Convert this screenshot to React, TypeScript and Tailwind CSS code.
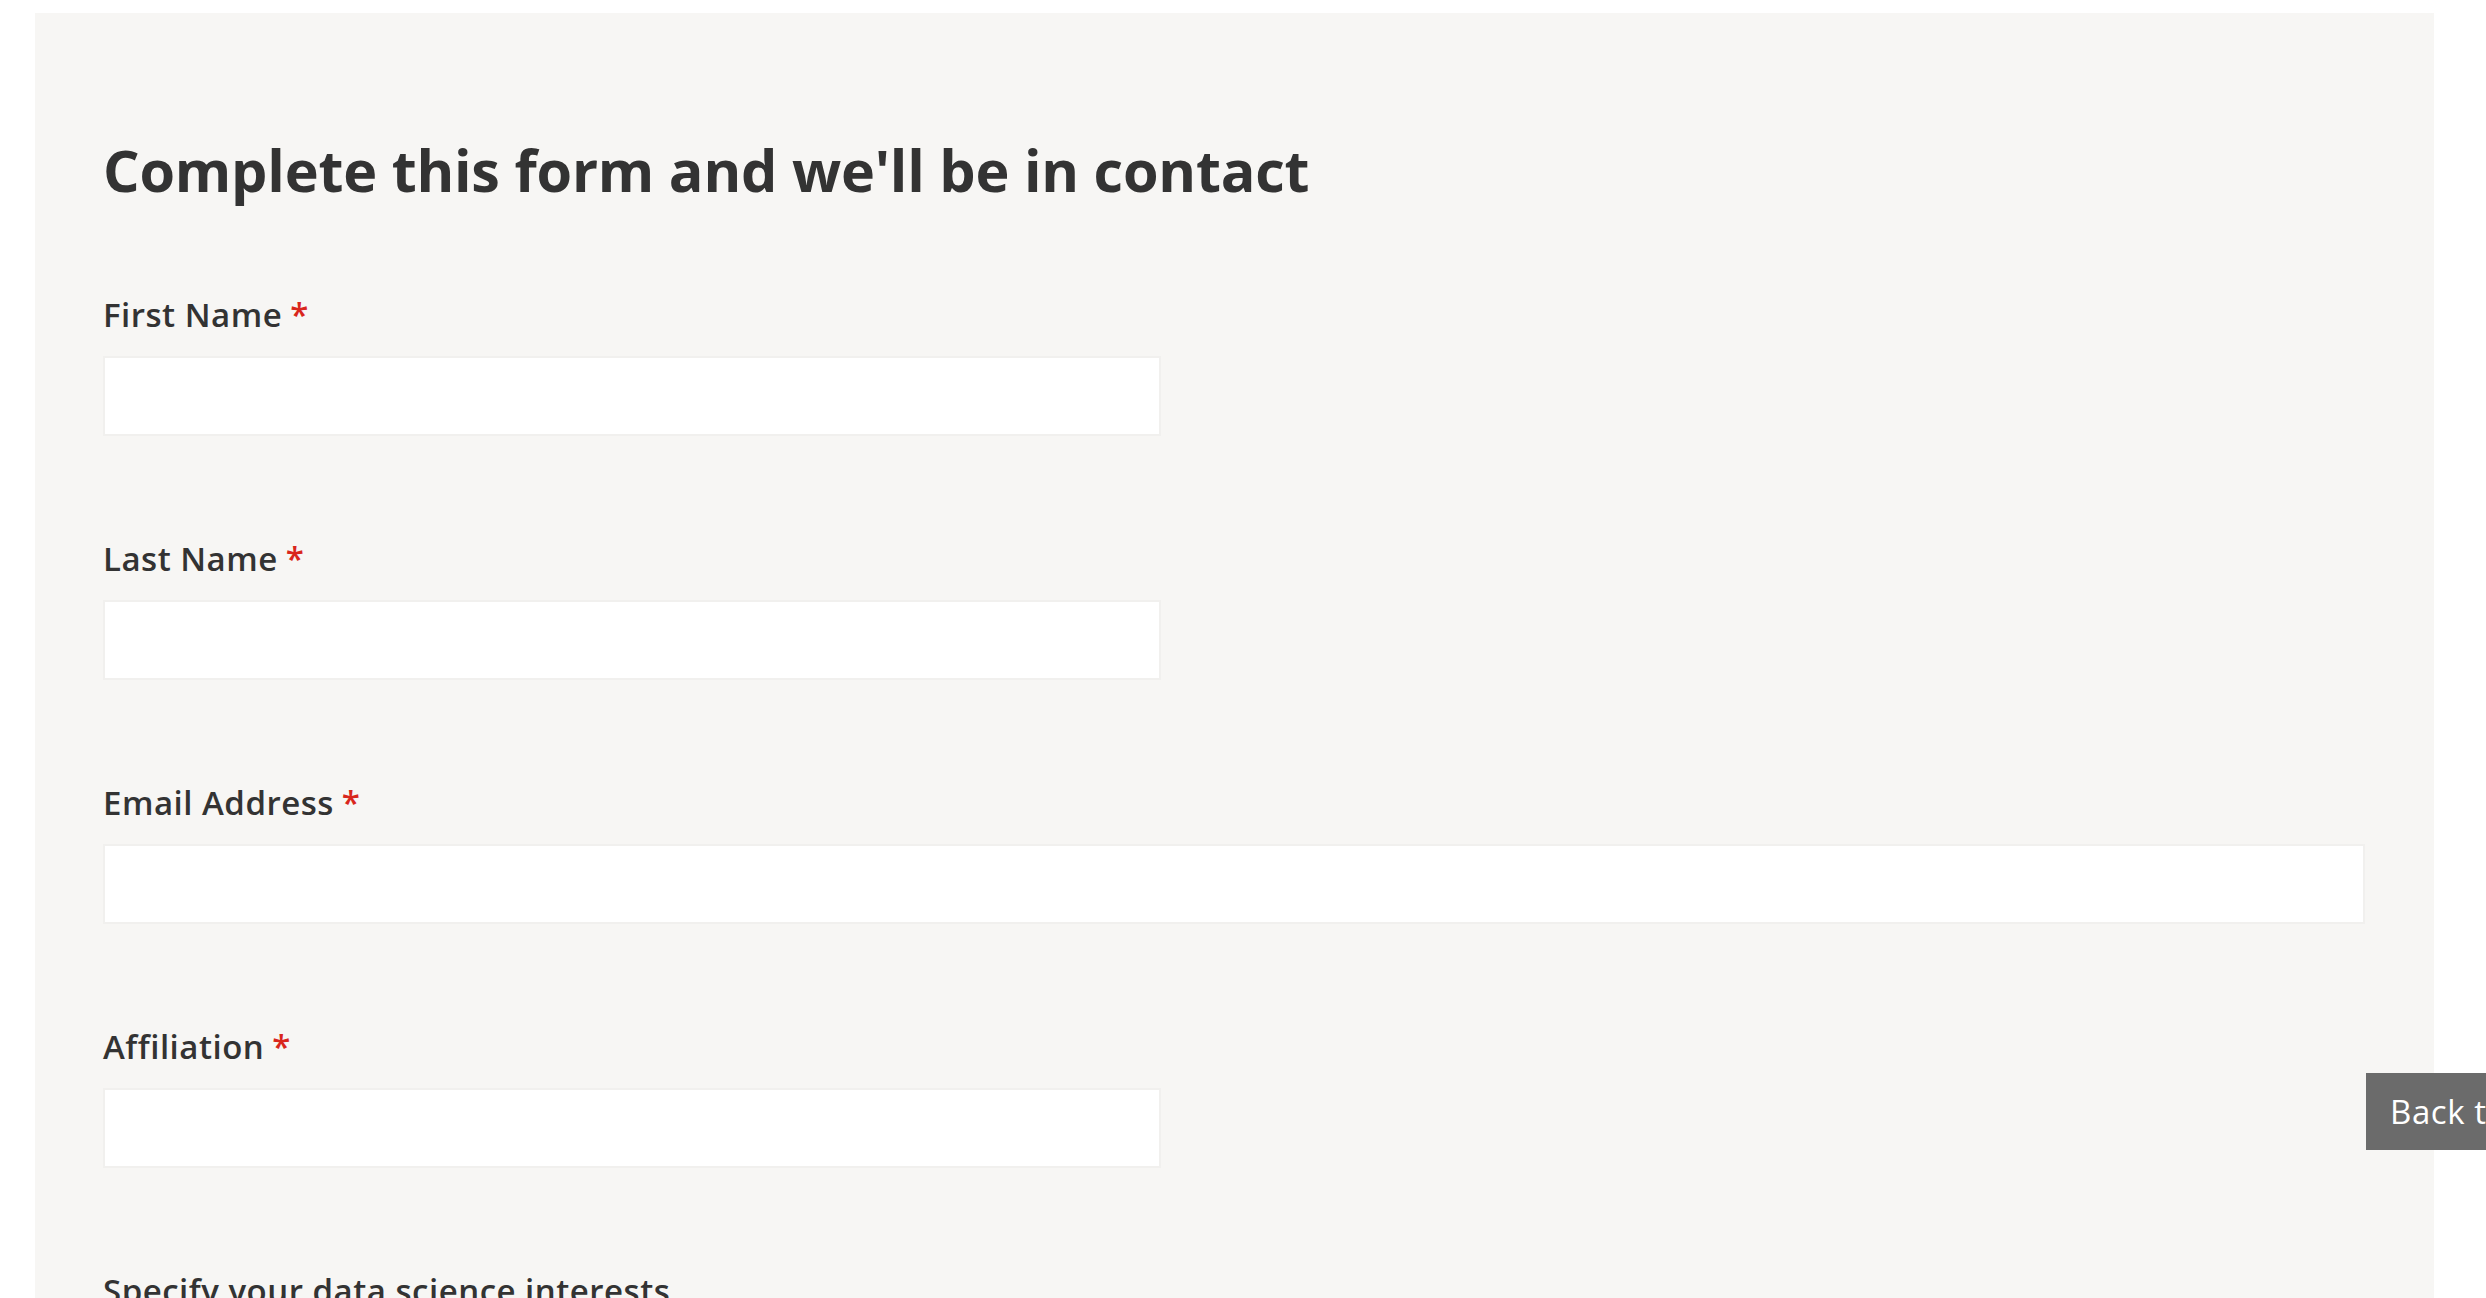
import React from 'react'

const fields = [
  { label: 'First Name', required: true, wide: false },
  { label: 'Last Name', required: true, wide: false },
  { label: 'Email Address', required: true, wide: true },
  { label: 'Affiliation', required: true, wide: false },
]

const interests = ['Machine Learning', 'Data Visualization', 'Statistics', 'Data Engineering']

export default function App() {
  return (
    <div
      className="relative h-[1298px] overflow-hidden bg-white text-[#333333]"
      style={{ fontFamily: '"Open Sans", "Noto Sans", Arial, sans-serif' }}
    >
      <main className="ml-[35px] mr-[52px] mt-[13px] bg-[#f7f6f4] pl-[68px] pr-[69px] pt-[122px] pb-[120px]">
        <h2 className="text-[57.5px] font-bold leading-[70px] tracking-[-0.2px]">
          Complete this form and we&apos;ll be in contact
        </h2>

        <form className="mt-[88px] flex flex-col gap-[101px]">
          {fields.map((f) => (
            <div key={f.label} className="flex flex-col gap-[19px]">
              <label className="text-[33px] font-semibold leading-[44px] tracking-[0.5px]">
                {f.label}
                {f.required && <span className="ml-[8px] text-[#d9261c]">*</span>}
              </label>
              <input
                type="text"
                className={`h-[80px] border-2 border-[#f1f0ee] bg-white outline-none ${
                  f.wide ? 'w-full' : 'w-[1058px]'
                }`}
              />
            </div>
          ))}

          <div className="flex flex-col gap-[19px]">
            <label className="text-[33px] font-semibold leading-[44px] tracking-[0.5px]">
              Specify your data science interests
            </label>
            <div className="flex flex-col gap-3">
              {interests.map((i) => (
                <label key={i} className="flex items-center gap-3 text-[28px]">
                  <input type="checkbox" className="h-6 w-6" />
                  {i}
                </label>
              ))}
            </div>
          </div>
        </form>
      </main>

      <a
        href="#top"
        className="absolute left-[2366px] top-[1073px] flex h-[77px] w-[240px] items-center whitespace-nowrap bg-[#6b6b6b] pl-[24px] text-[33px] tracking-[0.6px] text-white"
      >
        Back to top
      </a>
    </div>
  )
}
